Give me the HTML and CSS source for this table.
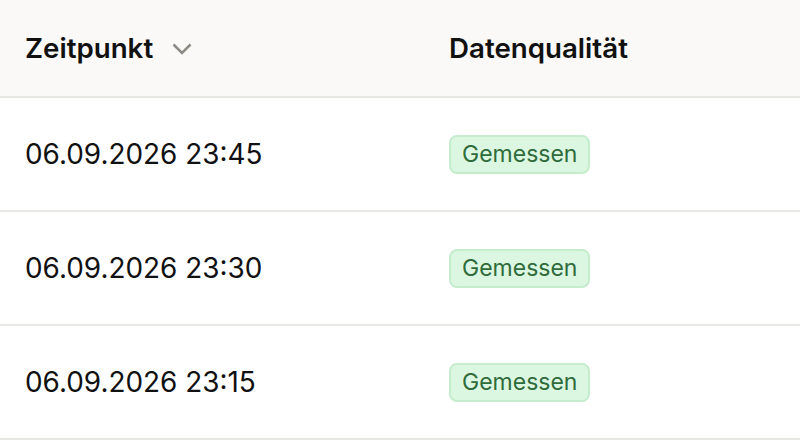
FILE: index.html
```html
<!DOCTYPE html>
<html lang="de">
<head>
<meta charset="utf-8">
<link rel="stylesheet" href="styles.css">
</head>
<body>
<table class="grid">
  <thead>
    <tr>
      <th class="col-time"><span class="sort">Zeitpunkt <svg class="chev" width="20" height="12" viewBox="0 0 20 12"><path d="M1.5 1.5 L10 10 L18.5 1.5" fill="none" stroke="#8c8b86" stroke-width="2.5"/></svg></span></th>
      <th class="col-q">Datenqualität</th>
    </tr>
  </thead>
  <tbody>
    <tr><td>06.09.2026 23:45</td><td><span class="badge">Gemessen</span></td></tr>
    <tr><td>06.09.2026 23:30</td><td><span class="badge">Gemessen</span></td></tr>
    <tr><td>06.09.2026 23:15</td><td><span class="badge">Gemessen</span></td></tr>
  </tbody>
</table>
</body>
</html>
```
FILE: styles.css
```css
html, body { margin: 0; padding: 0; background: #fff; }
body { font-family: Inter, "Noto Sans", sans-serif; color: #111; }
.grid { width: 800px; border-collapse: collapse; }
.grid th, .grid td { text-align: left; padding: 0 0 0 25px; border-bottom: 2px solid #e8e7e3; }
.grid thead th { height: 96px; background: #faf9f7; font-size: 27.7px; font-weight: 600; color: #111; }
.col-time { width: 399px; }
.grid td { height: 112px; font-size: 27.9px; font-weight: 400; }
.sort { display: inline-flex; align-items: center; gap: 19px; }
.chev { display: block; margin-top: 2px; }
.badge { display: inline-block; font-size: 23px; color: #2f6b3b; background: #dcf7e1; border: 2px solid #c6ecce; border-radius: 8px; padding: 5px 11px; line-height: 25px; }
```
